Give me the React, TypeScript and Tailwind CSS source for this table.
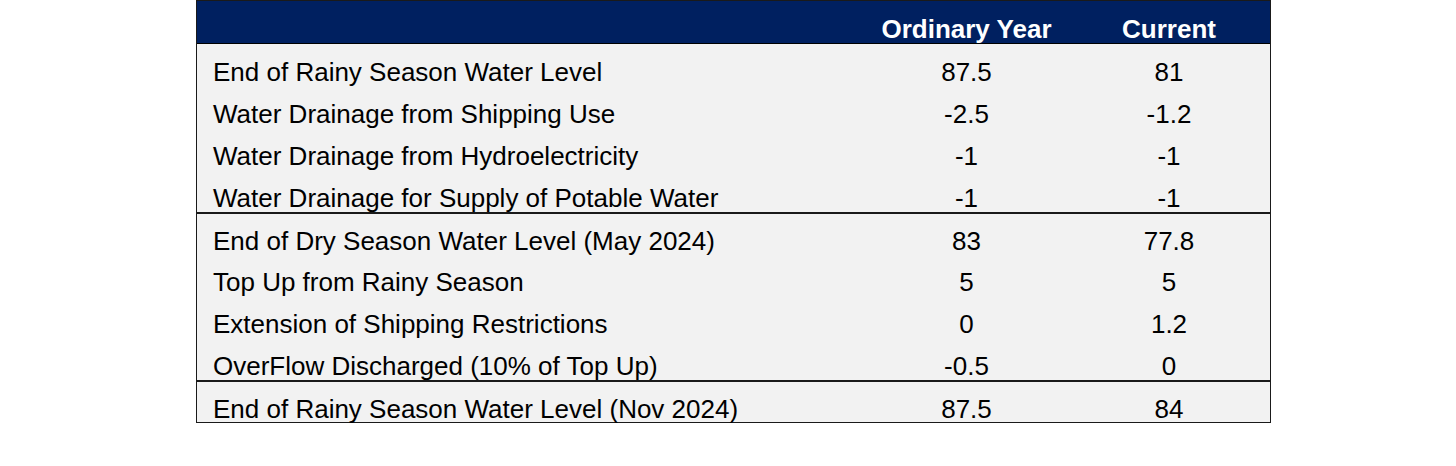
import React from 'react'

type Row = { label: string; ordinary: string; current: string; split?: boolean }

// Rows of the water level table, split marks a thick rule above the row
const rows: Row[] = [
  { label: 'End of Rainy Season Water Level', ordinary: '87.5', current: '81' },
  { label: 'Water Drainage from Shipping Use', ordinary: '-2.5', current: '-1.2' },
  { label: 'Water Drainage from Hydroelectricity', ordinary: '-1', current: '-1' },
  { label: 'Water Drainage for Supply of Potable Water', ordinary: '-1', current: '-1' },
  { label: 'End of Dry Season Water Level (May 2024)', ordinary: '83', current: '77.8', split: true },
  { label: 'Top Up from Rainy Season', ordinary: '5', current: '5' },
  { label: 'Extension of Shipping Restrictions', ordinary: '0', current: '1.2' },
  { label: 'OverFlow Discharged (10% of Top Up)', ordinary: '-0.5', current: '0' },
  { label: 'End of Rainy Season Water Level (Nov 2024)', ordinary: '87.5', current: '84', split: true },
]

const App = () => {
  return (
    <div className="min-h-screen w-full bg-white pl-[196px] font-['Liberation_Sans',Arial,sans-serif] text-[26px] leading-[26px] text-black">
      <div className="w-[1075px] border border-[#1a1a1a] bg-[#f2f2f2]">
        {/* Header */}
        <div className="grid h-[43px] grid-cols-[668px_203px_202px] border-b border-black bg-[#002060] pt-[15px] font-bold text-white">
          <div />
          <div className="text-center">Ordinary Year</div>
          <div className="text-center">Current</div>
        </div>

        {/* Body */}
        {rows.map((row, i) => (
          <div
            key={i}
            className={
              row.split
                ? 'grid h-[42px] grid-cols-[668px_203px_202px] border-t-2 border-[#1a1a1a] pt-[14px]'
                : 'grid h-[42px] grid-cols-[668px_203px_202px] pt-[15px]'
            }
          >
            <div className="pl-[16px] whitespace-nowrap">{row.label}</div>
            <div className="text-center">{row.ordinary}</div>
            <div className="text-center">{row.current}</div>
          </div>
        ))}
      </div>
    </div>
  )
}

export default App
